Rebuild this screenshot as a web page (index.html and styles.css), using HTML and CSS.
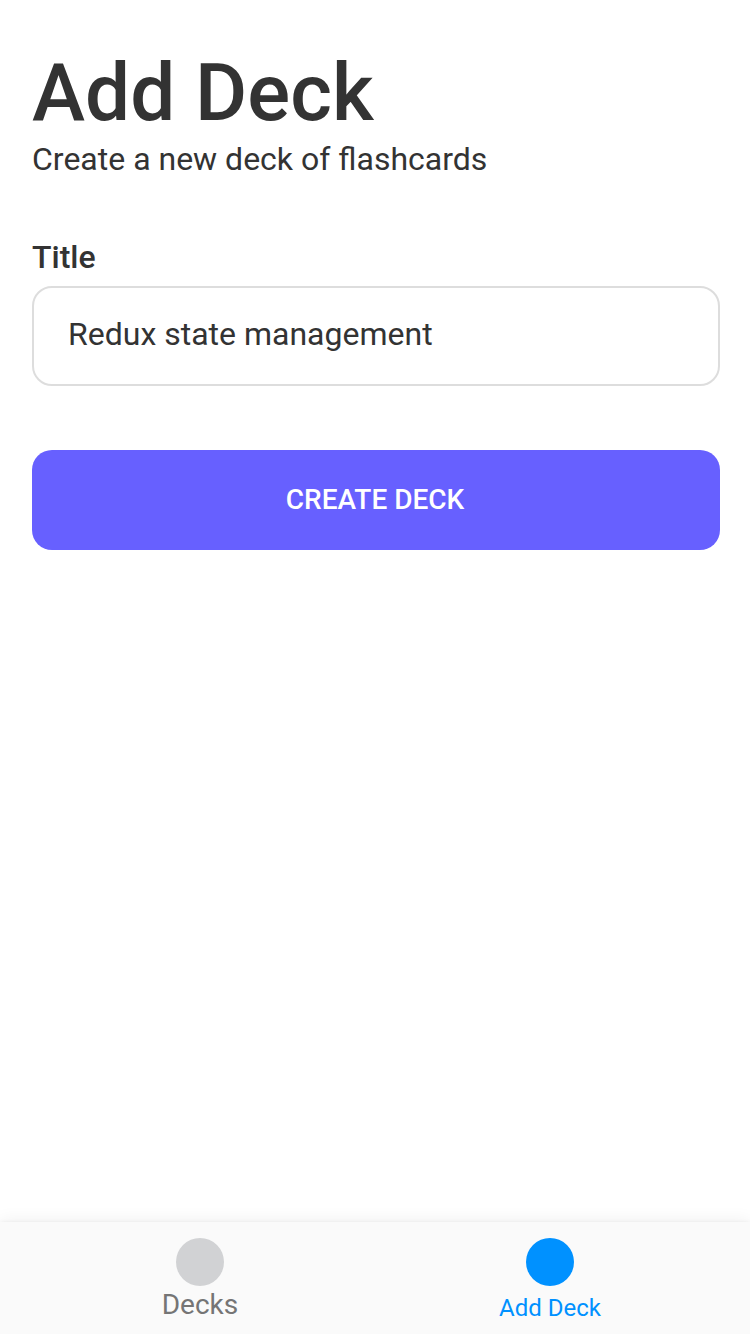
FILE: index.html
```html
<!DOCTYPE html>
<html lang="en">
<head>
<meta charset="utf-8">
<meta name="viewport" content="width=device-width, initial-scale=1">
<title>Add Deck</title>
<link rel="stylesheet" href="styles.css">
</head>
<body>
<main class="screen">
  <header class="intro">
    <h1 class="heading">Add Deck</h1>
    <p class="subtitle">Create a new deck of flashcards</p>
  </header>
  <form class="form">
    <label class="label" for="title">Title</label>
    <input class="field" id="title" type="text" value="Redux state management">
    <button class="submit" type="button">CREATE DECK</button>
  </form>
</main>
<nav class="tabs">
  <a class="tab" href="#decks"><span class="dot"></span><span class="tab-text">Decks</span></a>
  <a class="tab tab-active" href="#add" aria-current="page"><span class="dot"></span><span class="tab-text">Add Deck</span></a>
</nav>
</body>
</html>
```
FILE: styles.css
```css
* {
  box-sizing: border-box;
}

body {
  margin: 0;
  min-height: 100vh;
  display: flex;
  flex-direction: column;
  background: #fff;
  color: #333;
  font-family: Roboto, sans-serif;
  font-size: 32px;
}

.screen {
  flex: 1;
  padding: 44px 30px 32px 32px;
}

.heading {
  margin: 0;
  font-size: 80px;
  line-height: 98px;
  font-weight: 500;
}

.subtitle {
  margin: 0;
  line-height: 34px;
}

.form {
  display: flex;
  flex-direction: column;
  margin-top: 62px;
}

.label {
  font-weight: 500;
  line-height: 38px;
}

.field {
  height: 100px;
  margin-top: 10px;
  padding: 0 34px 4px;
  border: 2px solid #ddd;
  border-radius: 20px;
  background: #fff;
  color: inherit;
  font: inherit;
}

.submit {
  height: 100px;
  margin-top: 64px;
  padding: 0 2px 2px 0;
  border: 0;
  border-radius: 20px;
  background: #6760ff;
  color: #fff;
  font: inherit;
  font-size: 28px;
  font-weight: 500;
}

.tabs {
  display: flex;
  height: 112px;
  padding: 16px 25px 0;
  background: #fafafa;
  box-shadow: 0 0 4px rgba(0, 0, 0, 0.06), 0 -2px 16px rgba(0, 0, 0, 0.06);
}

.tab {
  flex: 1;
  display: flex;
  flex-direction: column;
  align-items: center;
  color: #757575;
  font-size: 28px;
  line-height: 38px;
  text-decoration: none;
}

.dot {
  width: 48px;
  height: 48px;
  border-radius: 50%;
  background: #d1d2d4;
}

.tab-active {
  color: #0091ff;
  font-size: 24px;
  line-height: 44px;
}

.tab-active .dot {
  background: #0091ff;
}
```
